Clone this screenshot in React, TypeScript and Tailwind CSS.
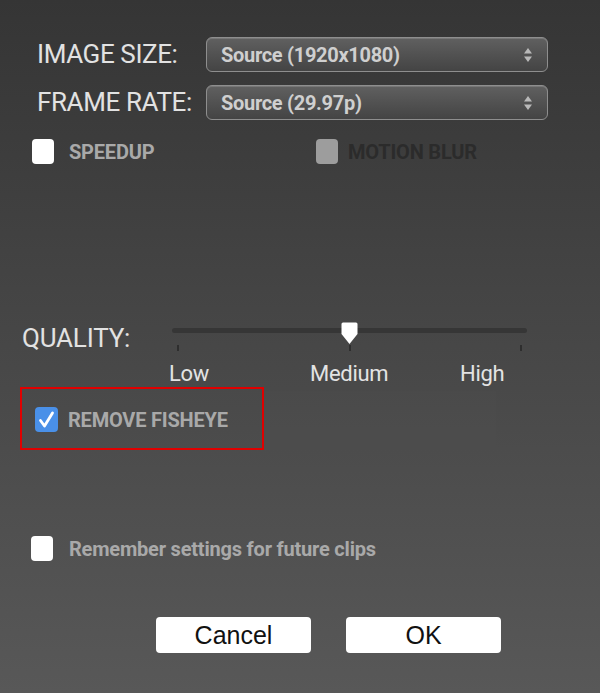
import React from "react"

const font = { fontFamily: "Roboto, 'Liberation Sans', sans-serif" }

function Select({ value }: { value: string }) {
  return (
    <div className="flex h-[35px] w-[342px] items-center justify-between rounded-[6px] border border-[#8e8e8e] bg-linear-to-b from-[#606060] to-[#444444] pl-[14px] pr-[14px] shadow-[inset_0_1px_0_rgba(255,255,255,0.15)]">
      <span className="text-[20px] font-bold tracking-[-0.3px] text-[#cfcfcf]">{value}</span>
      <svg width="10" height="16" viewBox="0 0 10 16">
        <path d="M5 1 L9 6.5 H1 Z" fill="#b9b9b9" />
        <path d="M5 15 L9 9.5 H1 Z" fill="#b9b9b9" />
      </svg>
    </div>
  )
}

function Box({ tone }: { tone: "white" | "gray" | "blue" }) {
  if (tone === "blue") {
    return (
      <div className="flex h-[25px] w-[23px] items-center justify-center rounded-[4px] bg-[#4a90e8]">
        <svg width="19" height="19" viewBox="0 0 19 19">
          <path d="M3.5 10.5 L7.5 16 L15.5 3" fill="none" stroke="white" strokeWidth="2.8" strokeLinecap="round" strokeLinejoin="round" />
        </svg>
      </div>
    )
  }
  return (
    <div className={`h-[25px] w-[22px] rounded-[4px] ${tone === "white" ? "bg-white" : "bg-[#9d9d9d]"}`} />
  )
}

export default function App() {
  return (
    <div style={font} className="h-[693px] w-[600px] overflow-hidden bg-linear-to-b from-[#353535] via-[#474747] to-[#585858]">
      <div className="pt-[37px]">
        <div className="flex h-[35px] items-center">
          <div className="w-[206px] pl-[37px] text-[26px] tracking-[-0.4px] text-[#e2e2e2]">IMAGE SIZE:</div>
          <Select value="Source (1920x1080)" />
        </div>
        <div className="mt-[13px] flex h-[35px] items-center">
          <div className="w-[206px] pl-[37px] text-[26px] tracking-[-0.4px] text-[#e2e2e2]">FRAME RATE:</div>
          <Select value="Source (29.97p)" />
        </div>
        <div className="mt-[19px] flex h-[25px] items-center">
          <div className="flex w-[316px] items-center gap-[15px] pl-[32px]">
            <Box tone="white" />
            <span className="text-[20px] font-bold tracking-[-0.2px] text-[#a9a9a9]">SPEEDUP</span>
          </div>
          <div className="flex items-center gap-[10px]">
            <Box tone="gray" />
            <span className="text-[20px] font-bold tracking-[-0.2px] text-[#2b2b2b]">MOTION BLUR</span>
          </div>
        </div>
      </div>

      <div className="mt-[156px] flex h-[30px] items-start">
        <div className="w-[150px] pl-[22px] pt-[3px] text-[26px] leading-[30px] tracking-[-0.2px] text-[#e2e2e2]">QUALITY:</div>
        <div className="relative ml-[22px] h-[30px] w-[355px]">
          <div className="mt-[8px] h-[5px] rounded-full bg-[#363636]" />
          <div className="absolute left-[169px] top-[2px] h-[23px] w-[17px]">
            <svg width="17" height="23" viewBox="0 0 17 23">
              <path d="M2 0.5 H15 Q16.5 0.5 16.5 2 V12 L8.5 22 L0.5 12 V2 Q0.5 0.5 2 0.5 Z" fill="white" />
            </svg>
          </div>
          <div className="mt-[12px] flex justify-between px-[5px]">
            <div className="h-[6px] w-[2px] bg-[#2e2e2e]" />
            <div className="h-[6px] w-[2px] bg-[#2e2e2e]" />
            <div className="h-[6px] w-[2px] bg-[#2e2e2e]" />
          </div>
        </div>
      </div>
      <div className="mt-[12px] flex h-[24px] text-[22px] leading-[24px] tracking-[-0.3px] text-[#e3e3e3]">
        <span className="ml-[169px] w-[141px]">Low</span>
        <span className="w-[150px]">Medium</span>
        <span>High</span>
      </div>

      <div className="mt-[1px] flex h-[84px] items-start">
        <div className="ml-[20px] flex h-[63px] w-[244px] items-center gap-[10px] border-2 border-[#e00000] pl-[13px] pt-[2px]">
          <Box tone="blue" />
          <span className="text-[20px] font-bold tracking-[-0.2px] text-[#a9a9a9]">REMOVE FISHEYE</span>
        </div>
        <div className="mt-[4px] h-[80px] w-[232px] bg-[#4d4d4d]/40" />
      </div>

      <div className="mt-[65px] flex h-[25px] items-center gap-[16px] pl-[31px]">
        <Box tone="white" />
        <span className="text-[20px] font-bold tracking-[-0.2px] text-[#a9a9a9]">Remember settings for future clips</span>
      </div>

      <div className="mt-[56px] flex gap-[35px] pl-[156px]">
        <button className="h-[36px] w-[155px] rounded-[4px] bg-white text-[25px] text-[#111]" style={{ fontFamily: "'Liberation Sans', Arial, sans-serif" }}>Cancel</button>
        <button className="h-[36px] w-[155px] rounded-[4px] bg-white text-[25px] text-[#111]" style={{ fontFamily: "'Liberation Sans', Arial, sans-serif" }}>OK</button>
      </div>
    </div>
  )
}
